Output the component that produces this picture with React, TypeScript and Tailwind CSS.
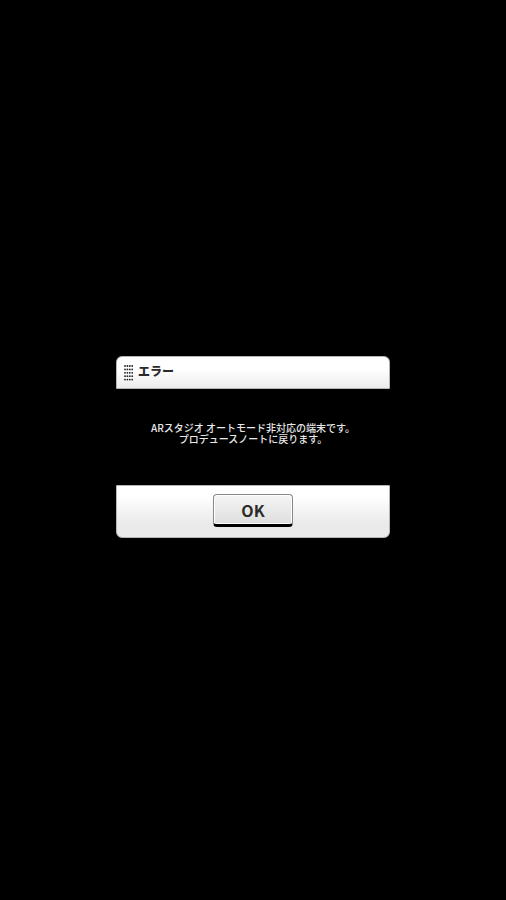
interface ErrorDialogProps {
  title: string;
  lines: string[];
  onClose?: () => void;
}

const DOT_COLUMNS = [1, 3.4, 5.8, 8.2];
const DOT_ROWS = [1, 4.4, 7.8, 11.2, 14.6];

function DotGrip() {
  return (
    <svg className="w-[10px] h-4 shrink-0" viewBox="0 0 10 16" fill="#222222" aria-hidden="true">
      {DOT_ROWS.map((y) =>
        DOT_COLUMNS.map((x) => <circle key={`${x}-${y}`} cx={x} cy={y} r="0.9" />)
      )}
    </svg>
  );
}

function ErrorDialog({ title, lines, onClose }: ErrorDialogProps) {
  return (
    <div
      role="alertdialog"
      aria-labelledby="dialog-title"
      aria-describedby="dialog-message"
      className="w-full max-w-[274px]"
    >
      {/* Header */}
      <div className="h-[33px] px-[7px] flex items-center gap-1 rounded-t-md border border-[#b5b5b5] bg-linear-to-b from-white from-40% to-[#ebebeb]">
        <DotGrip />
        <h1 id="dialog-title" className="pb-1 text-[12px] leading-4 font-black text-[#2b2b2b]">
          {title}
        </h1>
      </div>

      {/* Message */}
      <div className="h-24 flex items-center justify-center pb-2">
        <p
          id="dialog-message"
          className="text-[10px] leading-[11px] text-center font-medium whitespace-pre-line text-[#e8e8e8]"
        >
          {lines.join("\n")}
        </p>
      </div>

      {/* Footer */}
      <div className="h-[53px] pb-0.5 flex items-center justify-center rounded-b-md border border-[#b5b5b5] bg-linear-to-b from-white from-20% to-[#eaeaea] to-75%">
        <button
          type="button"
          onClick={onClose}
          className="w-20 h-[33px] rounded-sm border border-b-3 border-[#888888] border-b-black bg-linear-to-b from-[#f5f5f5] to-[#dedede] shadow-[inset_0_0_0_1px_#ffffff] text-[16px] leading-4 font-bold text-[#2b2b2b]"
        >
          OK
        </button>
      </div>
    </div>
  );
}

export default function App() {
  return (
    <main className="min-h-screen bg-black flex items-center justify-center pb-1.5 font-['Noto_Sans_CJK_JP',sans-serif]">
      <ErrorDialog
        title="エラー"
        lines={["ARスタジオ オートモード非対応の端末です。", "プロデュースノートに戻ります。"]}
      />
    </main>
  );
}
